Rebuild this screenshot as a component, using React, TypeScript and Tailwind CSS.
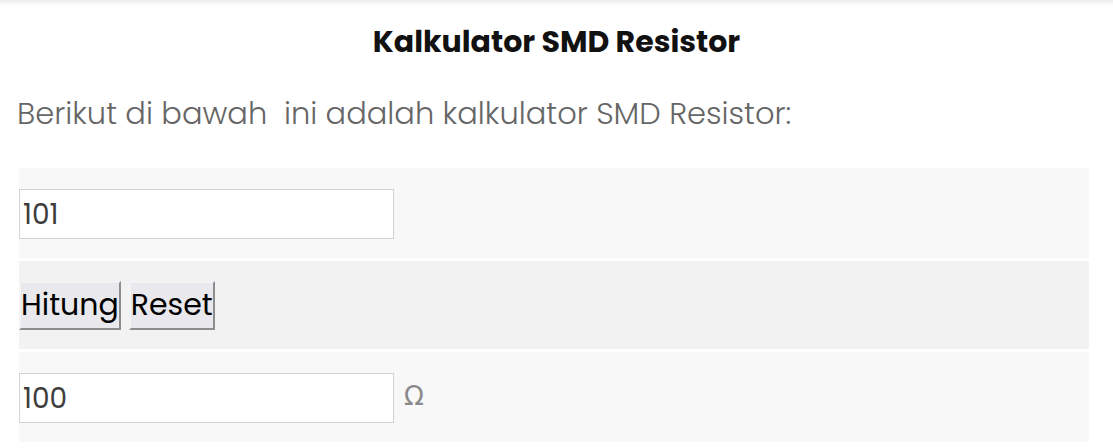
export default function App() {
  return (
    <div className="w-full h-[448px] bg-white overflow-hidden font-['Poppins','Open_Sans',sans-serif]">
      <div className="h-[6px] bg-gradient-to-b from-[#ececec] to-white" />

      <h1 className="mt-[18px] text-center text-[30px] leading-[36px] font-bold text-[#111]">
        Kalkulator SMD Resistor
      </h1>

      <p className="mt-[36px] pl-[17px] text-[30.5px] leading-[36px] font-light text-[#666]">
        Berikut di bawah&nbsp; ini adalah kalkulator SMD Resistor:
      </p>

      <div className="mt-[36px] ml-[19px] w-[1070px] flex flex-col gap-[3px]">
        <div className="h-[90px] bg-[#f8f8f8] flex items-center pt-[2px]">
          <ValueInput value="101" />
        </div>

        <div className="h-[88px] bg-[#f2f2f2] flex items-center gap-[8px]">
          <button className="h-[49px] px-0 bg-[#e9e9ed] text-black text-[30px] leading-none border-2 border-t-[#f3f3f3] border-l-[#f3f3f3] border-b-[#8d8d8d] border-r-[#8d8d8d]">
            Hitung
          </button>
          <button className="h-[49px] px-0 bg-[#e9e9ed] text-black text-[30px] leading-none border-2 border-t-[#f3f3f3] border-l-[#f3f3f3] border-b-[#8d8d8d] border-r-[#8d8d8d]">
            Reset
          </button>
        </div>

        <div className="h-[90px] bg-[#f8f8f8] flex items-center gap-[10px] pt-[2px]">
          <ValueInput value="100" />
          <span className="text-[26px] text-[#8a8a8a] font-['DejaVu_Sans',sans-serif] -mt-[4px]">Ω</span>
        </div>
      </div>
    </div>
  )
}

function ValueInput({ value }: { value: string }) {
  return (
    <div className="w-[375px] h-[50px] bg-white border border-[#d3d3d3] flex items-center px-[3px] pt-[2px]">
      <span className="text-[28px] text-[#3d3d3d]">{value}</span>
    </div>
  )
}
